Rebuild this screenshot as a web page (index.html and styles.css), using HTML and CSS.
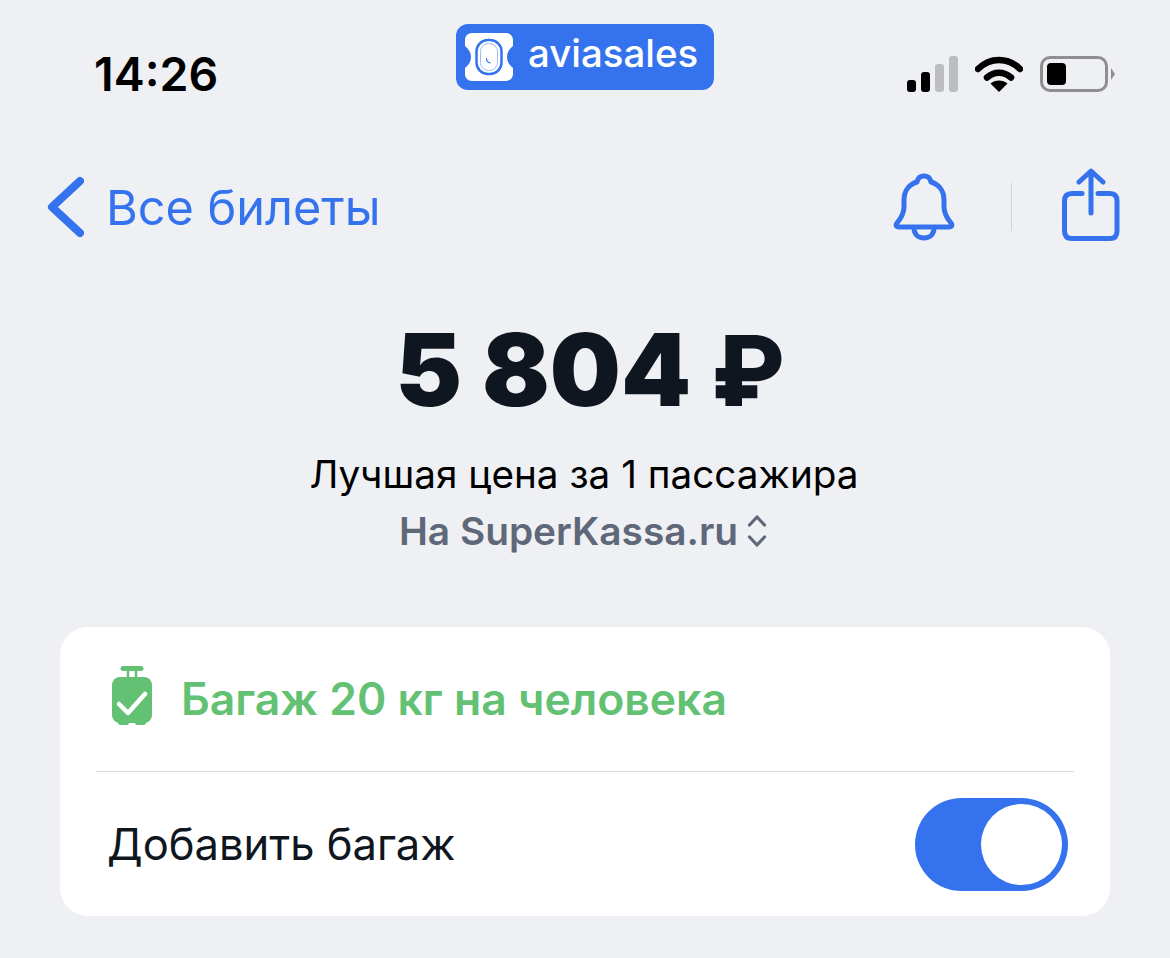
FILE: index.html
```html
<!DOCTYPE html>
<html lang="ru">
<head>
  <meta charset="UTF-8">
  <title>Aviasales</title>
  <link rel="stylesheet" href="styles.css">
</head>
<body>

  <div class="status-bar">
    <div class="time">14:26</div>
    <div class="logo">
      <svg class="logo-icon" width="48" height="48" viewBox="0 0 48 48">
        <path d="M7 0H41C45 0 48 3 48 7V13C44 16 42 20 42 24C42 28 44 32 48 35V41C48 45 45 48 41 48H7C3 48 0 45 0 41V35C4 32 6 28 6 24C6 20 4 16 0 13V7C0 3 3 0 7 0Z" fill="#fff"/>
        <rect x="11.500" y="7" width="25" height="34" rx="11.500" fill="none" stroke="#3573ee" stroke-width="2.500"/>
        <rect x="15.500" y="10.500" width="17" height="27" rx="8" fill="none" stroke="#9dbdf7" stroke-width="1"/>
        <path d="M21.500 25.500C21.500 28 23 29.500 25 29.800" fill="none" stroke="#3573ee" stroke-width="1.200" stroke-linecap="round"/>
      </svg>
      <span class="logo-text">aviasales</span>
    </div>
    <div class="status-icons">
      <svg width="52" height="36" viewBox="0 0 52 36">
        <rect x="0" y="24" width="9" height="12" rx="3" fill="#000"/>
        <rect x="14" y="16" width="9" height="20" rx="3" fill="#000"/>
        <rect x="28" y="8" width="9" height="28" rx="3" fill="#bcbdc0"/>
        <rect x="42" y="0" width="9" height="36" rx="3" fill="#bcbdc0"/>
      </svg>
      <svg class="wifi" width="48" height="36" viewBox="0 0 48 36">
        <path d="M3 13C15 1 33 1 45 13" fill="none" stroke="#000" stroke-width="6.500" stroke-linecap="round"/>
        <path d="M12 21.500C19 15 29 15 36 21.500" fill="none" stroke="#000" stroke-width="6.500" stroke-linecap="round"/>
        <path d="M15.500 27.500C20 23.500 28 23.500 32.500 27.500L24 36Z" fill="#000"/>
      </svg>
      <div class="battery">
        <div class="battery-level"></div>
      </div>
      <div class="battery-cap"></div>
    </div>
  </div>

  <div class="nav">
    <div class="back">
      <svg width="38" height="62" viewBox="0 0 38 62">
        <path d="M34 5L6 31L34 57" fill="none" stroke="#3573ee" stroke-width="8" stroke-linecap="round" stroke-linejoin="round"/>
      </svg>
      <span class="back-text">Все билеты</span>
    </div>
    <div class="nav-actions">
      <svg width="62" height="68" viewBox="0 0 62 68">
        <path d="M4 50C9 44 11 40 11 34V27C11 17 17 11 24 9C25 4 28 3 31 3C34 3 37 4 38 9C45 11 51 17 51 27V34C51 40 53 44 58 50C60 53 58 54 56 54H6C4 54 2 53 4 50Z" fill="none" stroke="#3573ee" stroke-width="5" stroke-linejoin="round"/>
        <path d="M21 55C21 61 25 65 31 65C37 65 41 61 41 55" fill="none" stroke="#3573ee" stroke-width="5"/>
      </svg>
      <div class="divider"></div>
      <svg class="share-icon" width="60" height="74" viewBox="0 0 60 74">
        <path d="M21 25.500H11C6 25.500 3.500 28 3.500 33V63C3.500 68 6 70.500 11 70.500H49C54 70.500 56 68 56 63V33C56 28 54 25.500 49 25.500H37" fill="none" stroke="#3573ee" stroke-width="5" stroke-linecap="round"/>
        <path d="M30 45V4M18 14L30 3L42 14" fill="none" stroke="#3573ee" stroke-width="5" stroke-linecap="round" stroke-linejoin="round"/>
      </svg>
    </div>
  </div>

  <div class="price-block">
    <div class="price">5 804 <span class="ruble">₽</span></div>
    <div class="price-label">Лучшая цена за 1 пассажира</div>
    <div class="price-source">
      <span>На SuperKassa.ru</span>
      <svg width="20" height="34" viewBox="0 0 20 34">
        <path d="M2.500 11L10 3L17.500 11M2.500 23L10 31L17.500 23" fill="none" stroke="#5f6878" stroke-width="3.200" stroke-linecap="round" stroke-linejoin="round"/>
      </svg>
    </div>
  </div>

  <div class="card">
    <div class="baggage-row">
      <svg class="bag-icon" width="44" height="60" viewBox="0 0 44 60">
        <path d="M13 2.500H31" stroke="#63c174" stroke-width="5" stroke-linecap="round"/>
        <path d="M18 4V13M26 4V13" stroke="#63c174" stroke-width="2.500"/>
        <rect x="2" y="11" width="40" height="46" rx="8" fill="#63c174"/>
        <rect x="8" y="54" width="11" height="5" rx="2.500" fill="#63c174"/>
        <rect x="25" y="54" width="11" height="5" rx="2.500" fill="#63c174"/>
        <path d="M9 38L18 47L35 28" fill="none" stroke="#fff" stroke-width="4.500" stroke-linecap="round" stroke-linejoin="round"/>
      </svg>
      <span class="baggage-text">Багаж 20 кг на человека</span>
    </div>
    <div class="card-line"></div>
    <div class="toggle-row">
      <span class="toggle-label">Добавить багаж</span>
      <div class="toggle">
        <div class="toggle-knob"></div>
      </div>
    </div>
  </div>

</body>
</html>
```

FILE: styles.css
```css
body {
  margin: 0;
  font-family: Inter, 'Liberation Sans', sans-serif;
  background-color: #eff0f4;
  color: #0f1620;
}

.status-bar {
  display: grid;
  grid-template-columns: 1fr auto 1fr;
  align-items: start;
  height: 162px;
  padding: 24px 55px 0;
  box-sizing: border-box;
}

.time {
  margin: 22px 0 0 39px;
  font-size: 46.500px;
  line-height: 56px;
  font-weight: 600;
  color: #000;
}

.logo {
  display: flex;
  align-items: center;
  gap: 15px;
  width: 258px;
  height: 66px;
  padding-left: 9px;
  box-sizing: border-box;
  background-color: #3573ee;
  border-radius: 12px;
}

.logo-text {
  margin-bottom: 8px;
  font-size: 38.400px;
  font-weight: 500;
  color: #fff;
}

.status-icons {
  display: flex;
  justify-content: flex-end;
  align-items: center;
  margin-top: 32px;
}

.wifi {
  margin-left: 16px;
}

.battery {
  width: 68px;
  height: 36px;
  margin-left: 17px;
  padding: 4px;
  box-sizing: border-box;
  border: 3px solid #8e8e93;
  border-radius: 10px;
}

.battery-level {
  width: 19px;
  height: 100%;
  background-color: #000;
  border-radius: 4px;
}

.battery-cap {
  width: 0;
  height: 0;
  margin-left: 3px;
  border-left: 4px solid #8e8e93;
  border-top: 6px solid transparent;
  border-bottom: 6px solid transparent;
}

.nav {
  display: flex;
  justify-content: space-between;
  align-items: center;
  height: 90px;
  padding: 0 49px 0 46px;
}

.back {
  display: flex;
  align-items: center;
  gap: 22px;
}

.back-text {
  font-size: 48.600px;
  color: #3573ee;
}

.nav-actions {
  display: flex;
  align-items: center;
}

.share-icon {
  margin-top: -4px;
}

.divider {
  width: 1px;
  height: 48px;
  margin: 0 49px 0 56px;
  background-color: #cfd2d8;
}

.price-block {
  display: flex;
  flex-direction: column;
  align-items: center;
  height: 375px;
  padding-top: 58px;
  box-sizing: border-box;
}

.price {
  padding-left: 10px;
  font-size: 100px;
  line-height: 120px;
  font-weight: 900;
}

.ruble {
  font-size: 97px;
  font-weight: 800;
}

.price-label {
  margin-top: 21px;
  padding-right: 2px;
  font-size: 38.700px;
  line-height: 44px;
  color: #000;
}

.price-source {
  display: flex;
  align-items: center;
  gap: 9px;
  margin-top: 13px;
  padding-right: 4px;
  font-size: 38.800px;
  line-height: 44px;
  font-weight: 600;
  color: #5f6878;
}

.card {
  margin: 0 60px;
  padding: 0 36px;
  height: 289px;
  background-color: #fff;
  border-radius: 28px;
}

.baggage-row {
  display: flex;
  align-items: center;
  gap: 27px;
  height: 144px;
  padding-left: 14px;
}

.bag-icon {
  margin-top: -6px;
}

.baggage-text {
  font-size: 44.500px;
  font-weight: 600;
  color: #63c174;
}

.card-line {
  height: 1px;
  background-color: #d9dbe0;
}

.toggle-row {
  display: flex;
  justify-content: space-between;
  align-items: center;
  height: 144px;
  padding: 0 6px 0 11px;
}

.toggle-label {
  font-size: 43.500px;
}

.toggle {
  display: flex;
  justify-content: flex-end;
  align-items: center;
  width: 153px;
  height: 93px;
  padding-right: 6px;
  box-sizing: border-box;
  background-color: #3573ee;
  border-radius: 47px;
}

.toggle-knob {
  width: 81px;
  height: 81px;
  background-color: #fff;
  border-radius: 50%;
}
```
